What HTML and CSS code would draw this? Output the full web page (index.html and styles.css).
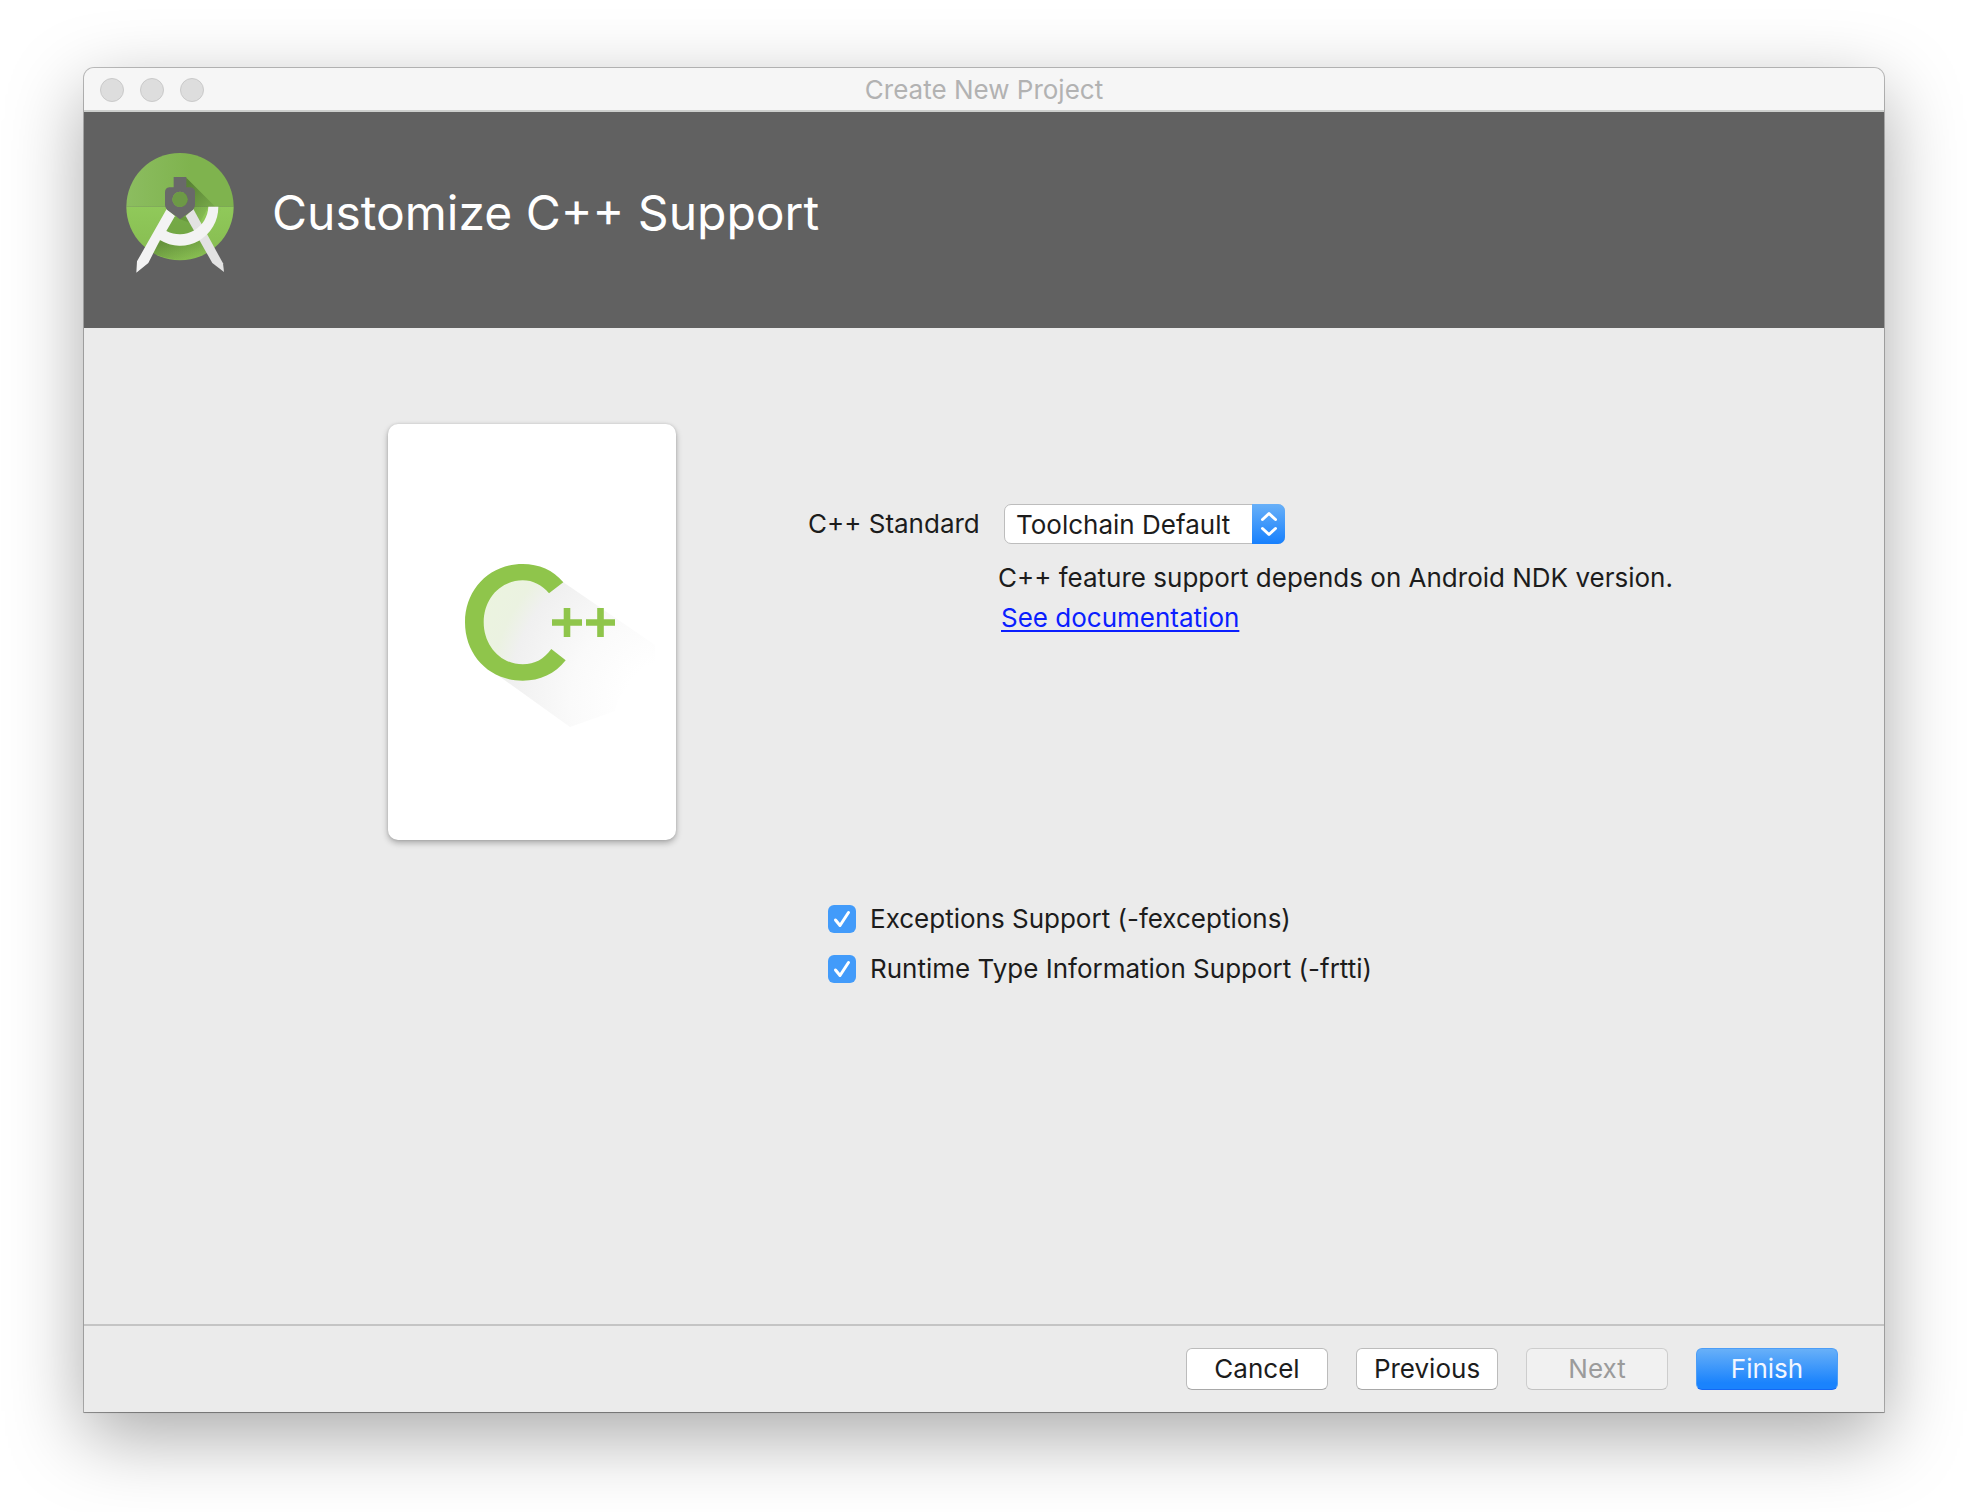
FILE: index.html
```html
<!DOCTYPE html>
<html lang="en">
<head>
<meta charset="utf-8">
<title>Create New Project</title>
<link rel="stylesheet" href="styles.css">
</head>
<body>
<div class="window">
  <div class="titlebar">
    <div class="lights"><span class="light"></span><span class="light"></span><span class="light"></span></div>
    <div class="window-title">Create New Project</div>
  </div>

  <header class="banner">
    <svg class="logo" viewBox="168 291 324 360" aria-hidden="true">
      <defs>
        <linearGradient id="top" x1="0" y1="0" x2="1" y2="0"><stop offset="0" stop-color="#8cbd60"/><stop offset=".6" stop-color="#7fb34e"/></linearGradient>
        <linearGradient id="bottom" x1="0" y1="0" x2="0" y2="1"><stop offset="0" stop-color="#90c95a"/><stop offset="1" stop-color="#86bb50"/></linearGradient>
        <linearGradient id="cast" gradientUnits="userSpaceOnUse" x1="340" y1="400" x2="430" y2="490"><stop offset="0" stop-color="#33531c" stop-opacity=".5"/><stop offset="1" stop-color="#33531c" stop-opacity="0"/></linearGradient>
        <linearGradient id="low" gradientUnits="userSpaceOnUse" x1="320" y1="550" x2="340" y2="615"><stop offset="0" stop-color="#33531c" stop-opacity=".4"/><stop offset="1" stop-color="#33531c" stop-opacity="0"/></linearGradient>
      </defs>
      <path d="M169 452a161 161 0 0 1 322 0z" fill="url(#top)"/>
      <path d="M169 452a161 161 0 0 0 322 0z" fill="url(#bottom)"/>
      <path d="M349 365 436 452H415L385 510 330 490z" fill="url(#cast)"/>
      <path d="M445 452 478 485Q460 535 420 545L400 530Q440 500 445 452z" fill="url(#cast)"/>
      <path d="M312 482 348 482 392 533Q330 560 285 525z" fill="#4f7f2c" fill-opacity=".4"/>
      <path d="M272 553Q330 585 390 553L419 595Q330 630 245 590z" fill="url(#low)"/>
      <path d="M370 459 459 622 462 648 427 621 347 480z" fill="#e2e2e2"/>
      <path d="M445 452A115 116 0 0 1 270 552L235 621 199 650 201 616 290 459 315 480 289 525A86 86 0 0 0 415 452z" fill="#f3f3f3"/>
      <path fill-rule="evenodd" d="M311 363h38v31h13q13 2 13 15v38q0 8-6 14l-39 29-39-29q-6-6-6-14v-38q0-13 13-15h13zM330 407a23 23 0 1 0 0 46 23 23 0 0 0 0-46z" fill="#696969"/>
      <circle cx="330" cy="430" r="23" fill="#6d9946"/>
    </svg>
    <h1 class="heading">Customize C++ Support</h1>
  </header>

  <main class="content">
    <svg class="card" viewBox="0 0 288 416" role="img" aria-label="C++">
      <defs>
        <radialGradient id="beam" gradientUnits="userSpaceOnUse" cx="275" cy="276" r="205">
          <stop offset=".18" stop-color="#fff"/><stop offset=".45" stop-color="#fafafa"/><stop offset=".75" stop-color="#f0f0f0"/><stop offset=".85" stop-color="#ebf2e1"/><stop offset="1" stop-color="#ebf4df"/>
        </radialGradient>
      </defs>
      <path d="M175 158 267 221V238Q230 265 227 287L182 303 108 250Q86 236 86 198 88 152 134 148z" fill="url(#beam)"/>
      <path d="M175.300 158.300C165 146 151 140 134.700 140 101 140 77 166 77 198.300 77 231 101 256.700 134.700 256.700 152 256.700 167 250 177.700 236.300L163.300 225C156 235 147 240.300 134.700 240.300 112 240.300 95.700 221 95.700 198.300 95.700 175 112 156.300 134.700 156.300 145 156.300 154 161 161 169.300z" fill="#8fc54b"/>
      <path d="M164 198.500h30M179 184v29M198 198.500h29M212.500 184v29" stroke="#8fc54b" stroke-width="6.600"/>
    </svg>

    <form class="form" id="options">
      <div class="field">
        <label class="field-label" for="standard">C++ Standard</label>
        <div class="picker">
          <select id="standard"><option>Toolchain Default</option><option>C++11</option><option>C++14</option></select>
          <svg class="picker-arrows" viewBox="0 0 33 40" aria-hidden="true"><path d="M10.500 15.500 17 9.500l6.500 6M10.500 24.500l6.500 6 6.500-6"/></svg>
        </div>
      </div>
      <div class="notes">
        <p class="hint">C++ feature support depends on Android NDK version.</p>
        <a class="doc-link" href="#documentation">See documentation</a>
      </div>
      <div class="checks">
        <label class="check"><input type="checkbox" checked><svg class="tick" viewBox="0 0 28 28" aria-hidden="true"><path d="M7.500 15 12 20.500 20.500 7.500"/></svg>Exceptions Support (-fexceptions)</label>
        <label class="check"><input type="checkbox" checked><svg class="tick" viewBox="0 0 28 28" aria-hidden="true"><path d="M7.500 15 12 20.500 20.500 7.500"/></svg>Runtime Type Information Support (-frtti)</label>
      </div>
    </form>
  </main>

  <footer class="actions">
    <button class="btn" type="button">Cancel</button>
    <button class="btn" type="button">Previous</button>
    <button class="btn" type="button" disabled>Next</button>
    <button class="btn btn-primary" type="submit" form="options">Finish</button>
  </footer>
</div>
</body>
</html>
```
FILE: styles.css
```css
* { box-sizing: border-box; }

body {
  margin: 0;
  min-height: 100vh;
  padding: 68px 84px 100px;
  display: flex;
  background: #fff;
  color: #1c1c1c;
  font: 26px/40px Inter, "Liberation Sans", sans-serif;
}

.window {
  flex: 1;
  display: flex;
  flex-direction: column;
  background: #ebebeb;
  border-radius: 10px 10px 0 0;
  box-shadow: 0 0 0 1px rgba(0, 0, 0, .24), 0 1px 1px rgba(0, 0, 0, .2), 0 24px 76px rgba(0, 0, 0, .34);
}

.titlebar {
  display: grid;
  grid-template-columns: 1fr auto 1fr;
  align-items: center;
  height: 44px;
  padding: 2px 16px 0;
  background: #f6f6f6;
  border-bottom: 2px solid #cdcfcd;
  border-radius: 10px 10px 0 0;
}

.lights { display: flex; gap: 16px; }

.light {
  width: 24px;
  height: 24px;
  border: 1px solid #cacaca;
  border-radius: 50%;
  background: #dddddd;
}

.window-title { color: #b2b2b2; }

.banner {
  display: flex;
  align-items: center;
  gap: 38px;
  min-height: 216px;
  padding: 0 42px 14px;
  background: #616161;
}

.logo { width: 108px; height: 120px; }

.heading {
  margin: 0;
  color: #fff;
  font-size: 48px;
  font-weight: 400;
  line-height: 60px;
}

.content {
  flex: 1;
  display: flex;
  align-items: flex-start;
  gap: 132px;
  padding: 96px 40px 40px 304px;
}

.card {
  flex: none;
  width: 288px;
  height: 416px;
  border-radius: 10px;
  background: #fff;
  box-shadow: 0 3px 6px rgba(0, 0, 0, .28), 0 0 3px rgba(0, 0, 0, .12);
}

.form { flex: 1; padding-top: 80px; }

.field { display: flex; }

.field-label { width: 196px; }

.picker { position: relative; width: 281px; }

.picker select {
  appearance: none;
  width: 100%;
  height: 40px;
  padding: 0 34px 0 11px;
  border: 1px solid #bdbdbd;
  border-radius: 7px;
  background: #fff;
  color: inherit;
  font: inherit;
}

.picker-arrows {
  position: absolute;
  top: 0;
  right: 0;
  width: 33px;
  height: 40px;
  border-radius: 0 7px 7px 0;
  background: linear-gradient(#68b0f8, #1780fd);
  pointer-events: none;
}

.picker-arrows path,
.tick path {
  fill: none;
  stroke: #fff;
  stroke-width: 3;
  stroke-linecap: round;
  stroke-linejoin: round;
}

.notes { padding: 13px 0 0 190px; }

.hint { margin: 0; }

.doc-link {
  margin-left: 3px;
  color: #0a1eff;
  text-decoration-thickness: 2px;
  text-underline-offset: 3px;
}

.checks {
  display: grid;
  gap: 10px;
  justify-items: start;
  padding: 261px 0 0 20px;
}

.check {
  display: grid;
  grid-template-columns: 28px auto;
  column-gap: 14px;
  align-items: center;
}

.check input {
  grid-area: 1 / 1;
  appearance: none;
  width: 28px;
  height: 28px;
  margin: 0;
  border-radius: 6px;
  background: #429bfa;
}

.tick {
  grid-area: 1 / 1;
  z-index: 1;
  width: 28px;
  height: 28px;
  pointer-events: none;
}

.check input:not(:checked) + .tick { visibility: hidden; }

.actions {
  display: flex;
  justify-content: flex-end;
  gap: 28px;
  padding: 22px 46px;
  border-top: 2px solid #c4c4c4;
}

.btn {
  width: 142px;
  height: 42px;
  padding: 0;
  border: 1px solid #bcbcbc;
  border-bottom-color: #a8a8a8;
  border-radius: 6px;
  background: #fff;
  color: inherit;
  font: inherit;
}

.btn:disabled {
  border-color: #cdcdcd;
  border-bottom-color: #c2c2c2;
  background: #f1f1f1;
  color: #9b9b9b;
}

.btn-primary {
  border-color: #4b9df7;
  border-bottom-color: #1468f5;
  background: linear-gradient(#68b0f8, #1a83fd 85%);
  color: #f2f6ff;
}
```
